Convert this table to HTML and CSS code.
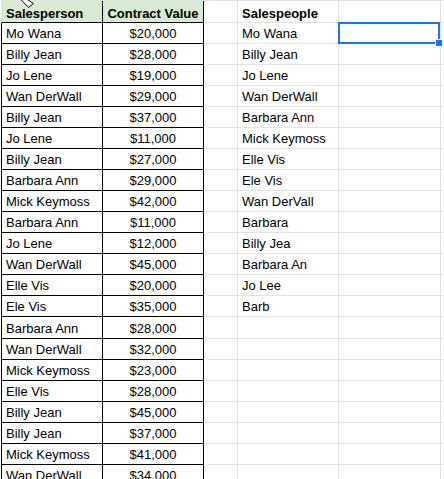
FILE: index.html
```html
<!DOCTYPE html>
<html>
<head>
<meta charset="utf-8">
<link rel="stylesheet" href="styles.css">
</head>
<body>
<div class="sheet">
  <div class="row hdr">
    <div class="cell a bold">Salesperson</div>
    <div class="cell b bold">Contract Value</div>
    <div class="cell c"></div>
    <div class="cell d bold">Salespeople</div>
    <div class="cell e"></div>
    <div class="cell f"></div>
  </div>
  <div class="row"><div class="cell a">Mo Wana</div><div class="cell b">$20,000</div><div class="cell c"></div><div class="cell d">Mo Wana</div><div class="cell e"></div><div class="cell f"></div></div>
  <div class="row"><div class="cell a">Billy Jean</div><div class="cell b">$28,000</div><div class="cell c"></div><div class="cell d">Billy Jean</div><div class="cell e"></div><div class="cell f"></div></div>
  <div class="row"><div class="cell a">Jo Lene</div><div class="cell b">$19,000</div><div class="cell c"></div><div class="cell d">Jo Lene</div><div class="cell e"></div><div class="cell f"></div></div>
  <div class="row"><div class="cell a">Wan DerWall</div><div class="cell b">$29,000</div><div class="cell c"></div><div class="cell d">Wan DerWall</div><div class="cell e"></div><div class="cell f"></div></div>
  <div class="row"><div class="cell a">Billy Jean</div><div class="cell b">$37,000</div><div class="cell c"></div><div class="cell d">Barbara Ann</div><div class="cell e"></div><div class="cell f"></div></div>
  <div class="row"><div class="cell a">Jo Lene</div><div class="cell b">$11,000</div><div class="cell c"></div><div class="cell d">Mick Keymoss</div><div class="cell e"></div><div class="cell f"></div></div>
  <div class="row"><div class="cell a">Billy Jean</div><div class="cell b">$27,000</div><div class="cell c"></div><div class="cell d">Elle Vis</div><div class="cell e"></div><div class="cell f"></div></div>
  <div class="row"><div class="cell a">Barbara Ann</div><div class="cell b">$29,000</div><div class="cell c"></div><div class="cell d">Ele Vis</div><div class="cell e"></div><div class="cell f"></div></div>
  <div class="row"><div class="cell a">Mick Keymoss</div><div class="cell b">$42,000</div><div class="cell c"></div><div class="cell d">Wan DerVall</div><div class="cell e"></div><div class="cell f"></div></div>
  <div class="row"><div class="cell a">Barbara Ann</div><div class="cell b">$11,000</div><div class="cell c"></div><div class="cell d">Barbara</div><div class="cell e"></div><div class="cell f"></div></div>
  <div class="row"><div class="cell a">Jo Lene</div><div class="cell b">$12,000</div><div class="cell c"></div><div class="cell d">Billy Jea</div><div class="cell e"></div><div class="cell f"></div></div>
  <div class="row"><div class="cell a">Wan DerWall</div><div class="cell b">$45,000</div><div class="cell c"></div><div class="cell d">Barbara An</div><div class="cell e"></div><div class="cell f"></div></div>
  <div class="row"><div class="cell a">Elle Vis</div><div class="cell b">$20,000</div><div class="cell c"></div><div class="cell d">Jo Lee</div><div class="cell e"></div><div class="cell f"></div></div>
  <div class="row"><div class="cell a">Ele Vis</div><div class="cell b">$35,000</div><div class="cell c"></div><div class="cell d">Barb</div><div class="cell e"></div><div class="cell f"></div></div>
  <div class="row tall"><div class="cell a">Barbara Ann</div><div class="cell b">$28,000</div><div class="cell c"></div><div class="cell d"></div><div class="cell e"></div><div class="cell f"></div></div>
  <div class="row"><div class="cell a">Wan DerWall</div><div class="cell b">$32,000</div><div class="cell c"></div><div class="cell d"></div><div class="cell e"></div><div class="cell f"></div></div>
  <div class="row"><div class="cell a">Mick Keymoss</div><div class="cell b">$23,000</div><div class="cell c"></div><div class="cell d"></div><div class="cell e"></div><div class="cell f"></div></div>
  <div class="row"><div class="cell a">Elle Vis</div><div class="cell b">$28,000</div><div class="cell c"></div><div class="cell d"></div><div class="cell e"></div><div class="cell f"></div></div>
  <div class="row"><div class="cell a">Billy Jean</div><div class="cell b">$45,000</div><div class="cell c"></div><div class="cell d"></div><div class="cell e"></div><div class="cell f"></div></div>
  <div class="row"><div class="cell a">Billy Jean</div><div class="cell b">$37,000</div><div class="cell c"></div><div class="cell d"></div><div class="cell e"></div><div class="cell f"></div></div>
  <div class="row"><div class="cell a">Mick Keymoss</div><div class="cell b">$41,000</div><div class="cell c"></div><div class="cell d"></div><div class="cell e"></div><div class="cell f"></div></div>
  <div class="row"><div class="cell a">Wan DerWall</div><div class="cell b">$34,000</div><div class="cell c"></div><div class="cell d"></div><div class="cell e"></div><div class="cell f"></div></div>

  <div class="selection"><div class="handle"></div></div>
  <svg class="cursor" width="18" height="10" viewBox="0 0 18 10"><polygon points="1.5,-1 7.5,-1 14.5,3.5 9.5,7.5" fill="#fff" stroke="#000" stroke-width="1"/></svg>
</div>
</body>
</html>
```

FILE: styles.css
```css
html, body {
  margin: 0;
  padding: 0;
  background: #fff;
}
body {
  font-family: "Liberation Sans", Arial, sans-serif;
  font-size: 13px;
  color: #000;
  overflow: hidden;
}
.sheet {
  position: relative;
  width: 444px;
  height: 479px;
  overflow: hidden;
  padding-left: 1px;
  box-sizing: border-box;
}
.row {
  display: flex;
  height: 21px;
}
.row.tall {
  height: 22px;
}
.row.hdr {
  height: 23px;
  border-top: 1px solid #e2e3e3;
  box-sizing: border-box;
}
.cell {
  box-sizing: border-box;
  flex: none;
  height: 100%;
  display: flex;
  align-items: flex-end;
  padding: 0 4px 2px 4px;
  line-height: 15px;
  white-space: nowrap;
  overflow: hidden;
  border-right: 1px solid #e2e3e3;
  border-bottom: 1px solid #e2e3e3;
}
.bold { font-weight: bold; }
.a {
  width: 102px;
  border-left: 1px solid #000;
  border-color: #000;
}
.b {
  width: 101px;
  justify-content: center;
  border-color: #000;
}
.c { width: 34px; }
.d { width: 101px; }
.e { width: 102px; }
.f { width: 60px; }
.hdr .cell { padding-bottom: 1px; }
.hdr .a, .hdr .b {
  background: #d9ead3;
}
.hdr .a {
  border-left-color: #e2e3e3;
}
.selection {
  position: absolute;
  left: 338px;
  top: 22px;
  width: 102px;
  height: 22px;
  border: 2px solid #1a73e8;
  box-sizing: border-box;
}
.handle {
  position: absolute;
  right: -5px;
  bottom: -5px;
  width: 6px;
  height: 6px;
  background: #1a73e8;
  border: 1px solid #fff;
}
.cursor {
  position: absolute;
  left: 19px;
  top: 0;
}
```
